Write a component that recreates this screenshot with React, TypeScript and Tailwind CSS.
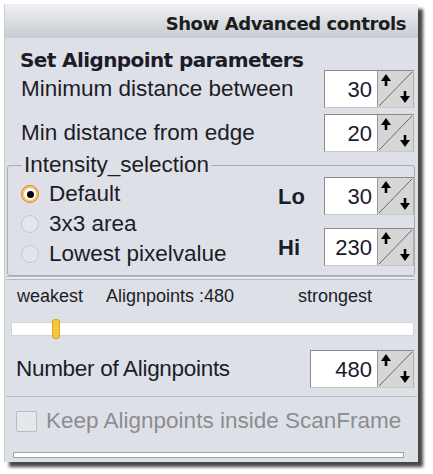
import React from "react";

const SpinButton = () => (
  <svg width="35" height="36" viewBox="0 0 35 36" className="block">
    <rect x="0" y="0" width="35" height="36" fill="#d6d6d6" />
    <line x1="1" y1="35" x2="34" y2="1" stroke="#6a6a6a" strokeWidth="1" />
    <line x1="8" y1="6" x2="8" y2="15" stroke="#000" strokeWidth="2.6" />
    <polygon points="3,10 8,3 13,10" fill="#000" />
    <line x1="27" y1="20" x2="27" y2="29" stroke="#000" strokeWidth="2.6" />
    <polygon points="22,25 27,32 32,25" fill="#000" />
  </svg>
);

const SpinBox = ({ value, inputWidth = 53 }: { value: string; inputWidth?: number }) => (
  <div className="flex border border-[#8a8a8a] border-r-[#b0b0b0] border-b-[#c8c8c8]">
    <div
      className="bg-white flex items-center justify-end pr-[5px] text-[22px] text-[#1a1a2a] border-r border-[#9a9a9a]"
      style={{ width: inputWidth }}
    >
      {value}
    </div>
    <SpinButton />
  </div>
);

const Radio = ({ checked }: { checked?: boolean }) =>
  checked ? (
    <span className="w-[18px] h-[18px] rounded-full border border-[#e08a20] bg-[#f7c27a] flex items-center justify-center">
      <span className="w-[12px] h-[12px] rounded-full bg-white flex items-center justify-center">
        <span className="w-[7px] h-[7px] rounded-full bg-black" />
      </span>
    </span>
  ) : (
    <span className="w-[18px] h-[18px] rounded-full border border-[#c4c8ce] bg-[#e2e5ea]" />
  );

export default function App() {
  return (
    <div className="w-[433px] h-[474px] bg-white pt-[4px] pl-[4px] font-['Liberation_Sans',Arial,sans-serif]">
      <div className="w-[414px] h-[458px] bg-[#dde1e7] border-l border-[#c9ccd1] shadow-[5px_5px_3px_rgba(40,40,40,0.85)] flex flex-col">
        {/* header */}
        <div className="h-[34px] bg-gradient-to-b from-[#eef0f3] to-[#c8ccd2] flex items-center justify-end pr-[12px] pt-[4px]">
          <span className="text-[18px] font-bold text-[#1c1c1c] font-['DejaVu_Sans',sans-serif] tracking-[-0.4px]">
            Show Advanced controls
          </span>
        </div>

        <div className="pl-[15px] pt-[7px] h-[28px] text-[20px] font-bold text-[#1c1c28] font-['DejaVu_Sans',sans-serif] tracking-[-0.6px]">
          Set Alignpoint parameters
        </div>

        <div className="flex items-center justify-between pl-[16px] pr-[4px] mt-[4px]">
          <span className="text-[22.5px] text-[#1c1c28]">Minimum distance between</span>
          <SpinBox value="30" />
        </div>
        <div className="flex items-center justify-between pl-[16px] pr-[4px] mt-[6px]">
          <span className="text-[22.5px] text-[#1c1c28]">Min distance from edge</span>
          <SpinBox value="20" />
        </div>

        {/* intensity group */}
        <fieldset className="mt-[1px] ml-[2px] mr-[3px] border border-[#a9adb3] rounded-[3px] h-[123px] pl-[13px] pr-[0px]">
          <legend className="text-[22.5px] text-[#1c1c28] leading-[24px] ml-[1px] px-[2px]">Intensity_selection</legend>
          <div className="flex justify-between">
            <div className="flex flex-col pt-[2px]">
              <label className="flex items-center gap-[10px] h-[30px] text-[22.5px] text-[#1c1c28]">
                <Radio checked /> Default
              </label>
              <label className="flex items-center gap-[10px] h-[30px] text-[22.5px] text-[#1c1c28]">
                <Radio /> 3x3 area
              </label>
              <label className="flex items-center gap-[10px] h-[30px] text-[22.5px] text-[#1c1c28]">
                <Radio /> Lowest pixelvalue
              </label>
            </div>
            <div className="flex flex-col gap-[13px]">
              <div className="flex items-center gap-[20px]">
                <span className="text-[22px] font-bold text-[#1c1c28] w-[26px]">Lo</span>
                <SpinBox value="30" />
              </div>
              <div className="flex items-center gap-[20px]">
                <span className="text-[22px] font-bold text-[#1c1c28] w-[26px]">Hi</span>
                <SpinBox value="230" />
              </div>
            </div>
          </div>
        </fieldset>
        <div className="ml-[1px] mr-[3px] h-[4px] border-t border-b border-[#b4b8be] bg-[#e8ebef]" />

        {/* slider section */}
        <div className="flex items-center h-[28px] mt-[2px] text-[18px] text-[#1c1c28] pl-[12px]">
          <span className="w-[89px]">weakest</span>
          <span className="w-[192px]">Alignpoints :480</span>
          <span>strongest</span>
        </div>
        <div className="relative ml-[6px] mr-[4px] mt-[12px] h-[14px] bg-white border border-[#d0d4da] rounded-[2px]">
          <div className="absolute left-[40px] top-[-4px] w-[8px] h-[20px] rounded-[3px] bg-[#f4c73c] border border-[#e0a020]" />
        </div>

        <div className="flex items-center justify-between pl-[11px] pr-[4px] mt-[14px]">
          <span className="text-[22.5px] text-[#1c1c28] tracking-[-0.3px]">Number of Alignpoints</span>
          <SpinBox value="480" inputWidth={67} />
        </div>
        <div className="mt-[8px] mx-[1px] h-[1px] bg-[#b8bcc2]" />

        <label className="flex items-center gap-[9px] pl-[11px] mt-[13px] h-[22px] text-[22.5px] text-[#8c8c90]">
          <span className="w-[21px] h-[21px] border border-[#b8bcc2] rounded-[2px] bg-[#e4e7eb]" />
          Keep Alignpoints inside ScanFrame
        </label>

        <div className="mt-[20px] ml-[8px] w-[391px] h-[6px] border border-[#9ea2a8] bg-white" />
      </div>
    </div>
  );
}
